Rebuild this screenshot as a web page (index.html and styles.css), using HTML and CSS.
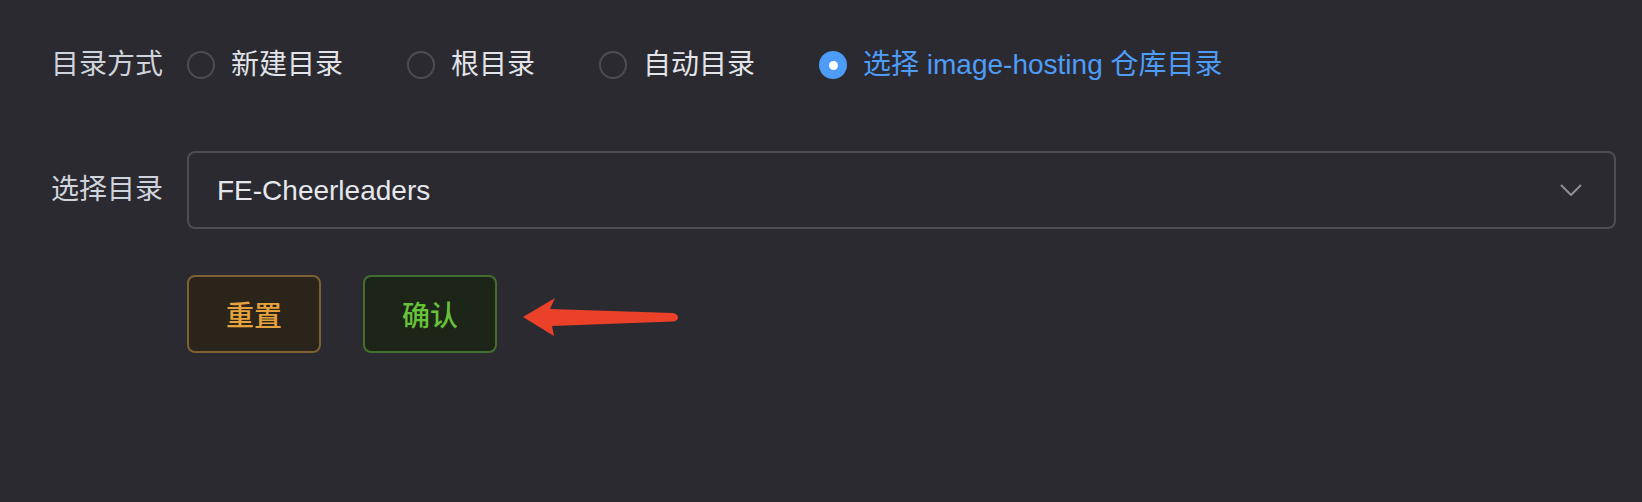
FILE: index.html
```html
<!DOCTYPE html>
<html lang="zh">
<head>
<meta charset="utf-8">
<link rel="stylesheet" href="styles.css">
</head>
<body>
<form class="form">
  <div class="form-item row-radio">
    <label class="form-label">目录方式</label>
    <div class="form-content radio-group">
      <label class="radio"><span class="radio-circle"></span><span class="radio-label">新建目录</span></label>
      <label class="radio"><span class="radio-circle"></span><span class="radio-label">根目录</span></label>
      <label class="radio"><span class="radio-circle"></span><span class="radio-label">自动目录</span></label>
      <label class="radio is-checked"><span class="radio-circle"></span><span class="radio-label">选择 image-hosting 仓库目录</span></label>
    </div>
  </div>
  <div class="form-item row-select">
    <label class="form-label">选择目录</label>
    <div class="form-content">
      <div class="select">
        <span class="select-value">FE-Cheerleaders</span>
        <svg class="select-arrow" width="22" height="12" viewBox="0 0 22 12"><path d="M1 1 L11 11 L21 1" fill="none" stroke="#8d9096" stroke-width="2"/></svg>
      </div>
    </div>
  </div>
  <div class="form-item row-buttons">
    <div class="form-content buttons">
      <button type="button" class="btn btn-warning">重置</button>
      <button type="button" class="btn btn-success">确认</button>
      <svg class="annot-arrow" width="160" height="44" viewBox="0 0 160 44">
        <path d="M0 20 L32 1 L27 12 L150 16 Q155 17 155 20.5 Q155 24 150 24.5 L29 29 L31 39 Z" fill="#ea4128"/>
      </svg>
    </div>
  </div>
</form>
</body>
</html>
```
FILE: styles.css
```css
html, body {
  margin: 0;
  padding: 0;
  background: #2b2a30;
  height: 100%;
}
body {
  font-family: "Liberation Sans", "Noto Sans CJK SC", sans-serif;
  font-size: 28px;
  color: #cfd3dc;
}
.form {
  padding: 25px 26px 0 48px;
}
.form-item {
  display: flex;
  align-items: center;
}
.form-label {
  width: 115px;
  padding-right: 24px;
  text-align: right;
  color: #cfd3dc;
  line-height: 40px;
  flex: none;
}
.form-content {
  flex: 1;
  display: flex;
  align-items: center;
}
.row-radio {
  height: 80px;
}
.row-select {
  margin-top: 46px;
  height: 78px;
}
.row-buttons {
  margin-top: 46px;
  padding-left: 139px;
}
.radio {
  display: flex;
  align-items: center;
  margin-right: 64px;
  cursor: pointer;
}
.radio-circle {
  width: 28px;
  height: 28px;
  box-sizing: border-box;
  border: 2px solid #4c4d4f;
  border-radius: 50%;
  flex: none;
  position: relative;
}
.radio-label {
  padding-left: 16px;
  color: #e2e4ea;
  line-height: 40px;
}
.is-checked .radio-circle {
  background: #4d9cf8;
  border-color: #4d9cf8;
}
.is-checked .radio-circle::after {
  content: "";
  position: absolute;
  left: 50%;
  top: 50%;
  width: 9px;
  height: 9px;
  margin: -4.5px 0 0 -4.5px;
  border-radius: 50%;
  background: #ffffff;
}
.is-checked .radio-label {
  color: #4d9cf8;
}
.select {
  flex: 1;
  height: 78px;
  box-sizing: border-box;
  border: 2px solid #4d4d52;
  border-radius: 8px;
  display: flex;
  align-items: center;
  justify-content: space-between;
  padding: 0 32px 0 28px;
}
.select-value {
  color: #e5e7ed;
  line-height: 40px;
  padding-top: 2px;
}
.select-arrow {
  flex: none;
}
.buttons {
  position: relative;
}
.btn {
  height: 78px;
  width: 134px;
  box-sizing: border-box;
  border-radius: 8px;
  border: 2px solid;
  font-family: "Noto Sans CJK SC", sans-serif;
  font-size: 28px;
  font-weight: 500;
  padding: 0;
  cursor: pointer;
}
.btn-warning {
  background: #2a241b;
  border-color: #7d6130;
  color: #e6a23c;
}
.btn-success {
  margin-left: 42px;
  background: #1d2519;
  border-color: #42702c;
  color: #67c23a;
}
.annot-arrow {
  margin-left: 26px;
  margin-top: 10px;
}
```
